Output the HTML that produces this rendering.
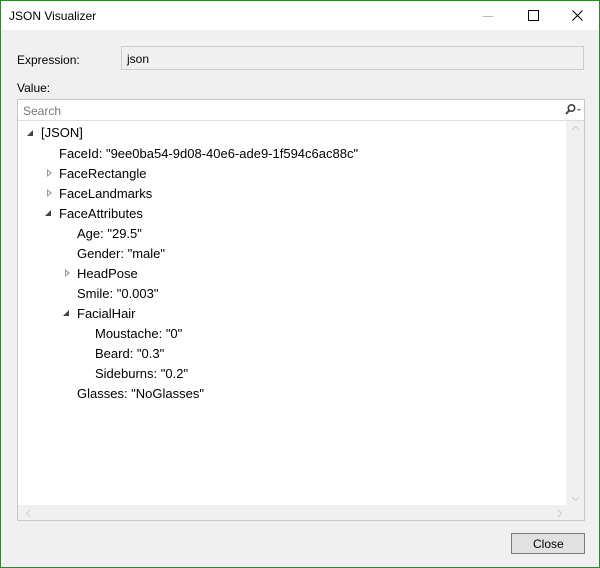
<!DOCTYPE html>
<html><head><style>
body{margin:0;width:600px;height:568px;overflow:hidden;font-family:"Liberation Sans",sans-serif;}
.win{position:absolute;left:0;top:0;width:598px;height:566px;border:1px solid #2b8a2b;background:#f0f0f0;}
.title{position:absolute;left:0;top:0;width:598px;height:29px;background:#fff;}
.t{position:absolute;font-size:12px;color:#000;white-space:nowrap;}
.box{position:absolute;box-sizing:border-box;}
.row{position:absolute;font-size:13px;color:#000;white-space:nowrap;line-height:16px;}
.ex{position:absolute;width:0;height:0;border-left:6px solid transparent;border-bottom:6px solid #444;}
.co{position:absolute;width:3px;height:6px;}
.co:before{content:"";position:absolute;left:0;top:0;width:0;height:0;border-top:4px solid transparent;border-bottom:4px solid transparent;border-left:5px solid #999;}
.co:after{content:"";position:absolute;left:1px;top:2px;width:0;height:0;border-top:2px solid transparent;border-bottom:2px solid transparent;border-left:2px solid #fff;}
</style></head><body>
<div class="win">
<div class="title">
<div class="t" style="left:8px;top:8px">JSON Visualizer</div>
<div style="position:absolute;left:482px;top:15px;width:10px;height:1px;background:#bbb"></div>
<div style="position:absolute;left:527px;top:9px;width:9px;height:9px;border:1px solid #000"></div>
<svg style="position:absolute;left:571px;top:9px" width="11" height="11"><path d="M0.5 0.5L10.5 10.5M10.5 0.5L0.5 10.5" stroke="#000" stroke-width="1.1"/></svg>
</div>
<div class="t" style="left:16px;top:52px">Expression:</div>
<div class="box" style="left:120px;top:45px;width:463px;height:24px;border:1px solid #ccc;background:#f0f0f0"></div>
<div class="t" style="left:126px;top:51px">json</div>
<div class="t" style="left:16px;top:80px">Value:</div>
<div class="box" style="left:16px;top:98px;width:568px;height:422px;border:1px solid #c8c8c8;background:#fff"></div>
<div class="box" style="left:17px;top:119px;width:566px;height:1px;background:#ddd"></div>
<div class="t" style="left:22px;top:103px;color:#777">Search</div>
<svg style="position:absolute;left:562px;top:102px" width="20" height="14"><circle cx="8.5" cy="5" r="3.2" fill="none" stroke="#444" stroke-width="1.6"/><path d="M6.3 7.3L3 11" stroke="#444" stroke-width="2"/><path d="M14 6h4l-2 2z" fill="#666"/></svg>
<div class="box" style="left:565px;top:120px;width:18px;height:384px;background:#f0f0f0"></div>
<svg style="position:absolute;left:570px;top:124px" width="9" height="6"><path d="M1 5L4.5 1.5L8 5" stroke="#ccc" fill="none"/></svg>
<svg style="position:absolute;left:570px;top:495px" width="9" height="6"><path d="M1 1L4.5 4.5L8 1" stroke="#ccc" fill="none"/></svg>
<div class="box" style="left:17px;top:504px;width:566px;height:15px;background:#f0f0f0"></div>
<svg style="position:absolute;left:24px;top:508px" width="6" height="9"><path d="M5 1L1.5 4.5L5 8" stroke="#ccc" fill="none"/></svg>
<svg style="position:absolute;left:556px;top:508px" width="6" height="9"><path d="M1 1L4.5 4.5L1 8" stroke="#ccc" fill="none"/></svg>

<div class="ex" style="left:26px;top:129px"></div><div class="row" style="left:40px;top:124px">[JSON]</div>
<div class="row" style="left:58px;top:145px">FaceId: "9ee0ba54-9d08-40e6-ade9-1f594c6ac88c"</div>
<div class="co" style="left:46px;top:168px"></div><div class="row" style="left:58px;top:165px">FaceRectangle</div>
<div class="co" style="left:46px;top:188px"></div><div class="row" style="left:58px;top:185px">FaceLandmarks</div>
<div class="ex" style="left:44px;top:209px"></div><div class="row" style="left:58px;top:205px">FaceAttributes</div>
<div class="row" style="left:76px;top:225px">Age: "29.5"</div>
<div class="row" style="left:76px;top:245px">Gender: "male"</div>
<div class="co" style="left:64px;top:268px"></div><div class="row" style="left:76px;top:265px">HeadPose</div>
<div class="row" style="left:76px;top:285px">Smile: "0.003"</div>
<div class="ex" style="left:62px;top:309px"></div><div class="row" style="left:76px;top:305px">FacialHair</div>
<div class="row" style="left:94px;top:325px">Moustache: "0"</div>
<div class="row" style="left:94px;top:345px">Beard: "0.3"</div>
<div class="row" style="left:94px;top:365px">Sideburns: "0.2"</div>
<div class="row" style="left:76px;top:385px">Glasses: "NoGlasses"</div>

<div class="box" style="left:510px;top:532px;width:74px;height:21px;border:1px solid #7a7a7a;background:#e1e1e1"></div>
<div class="t" style="left:532px;top:536px">Close</div>
</div>
</body></html>
